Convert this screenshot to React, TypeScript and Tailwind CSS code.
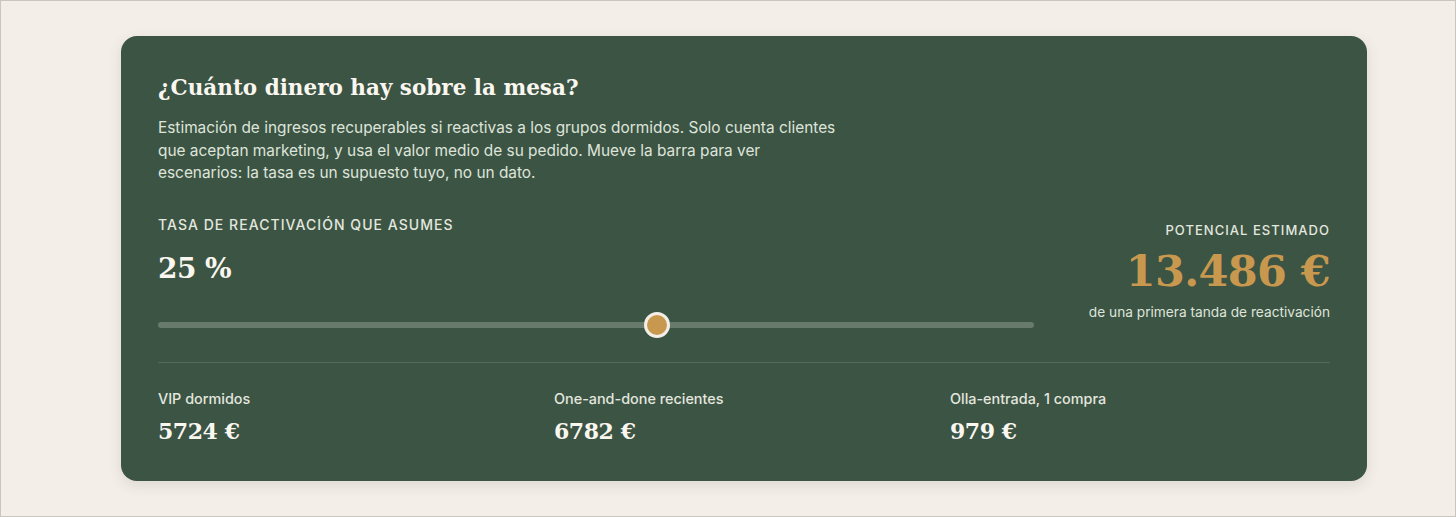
import { useState } from 'react';

const serif = { fontFamily: '"DejaVu Serif", "Liberation Serif", serif' };

const segments = [
  { label: 'VIP dormidos', value: 5724 },
  { label: 'One-and-done recientes', value: 6782 },
  { label: 'Olla-entrada, 1 compra', value: 979 },
];

const MIN_RATE = 5;
const MAX_RATE = 40;

function RateSlider({ value }: { value: number }) {
  const pct = (value - MIN_RATE) / (MAX_RATE - MIN_RATE);
  return (
    <div className="relative h-[26px] flex items-center">
      <div className="w-full h-[6px] rounded-full bg-[#687a6c]" />
      <div
        className="absolute top-0 h-[26px] w-[26px] rounded-full bg-[#c9984f] border-[3px] border-[#f3efe8]"
        style={{ left: `calc(${pct} * (100% - 26px))` }}
      />
    </div>
  );
}

export default function App() {
  const [rate] = useState(25);
  const total = segments.reduce((s, x) => s + x.value, 0) + 1;

  return (
    <div
      className="min-h-[517px] bg-[#f3efe8] border border-[#c9c5bf] pt-[35px]"
      style={{ fontFamily: 'Inter, "Noto Sans", sans-serif' }}
    >
      <div className="ml-[120px] w-[1246px] bg-[#3c5444] rounded-2xl px-[37px] pt-[37px] pb-[36px] shadow-[0_4px_14px_rgba(60,50,30,0.12)]">
        <h2 className="text-[21.5px] leading-[30px] font-bold text-[#faf7f0]" style={serif}>
          ¿Cuánto dinero hay sobre la mesa?
        </h2>
        <p className="mt-[14px] max-w-[690px] text-[15.4px] leading-[22.5px] text-[#dfe4db]">
          Estimación de ingresos recuperables si reactivas a los grupos dormidos. Solo cuenta clientes
          que aceptan marketing, y usa el valor medio de su pedido. Mueve la barra para ver
          escenarios: la tasa es un supuesto tuyo, no un dato.
        </p>

        <div className="mt-[30px] flex items-center gap-[55px]">
          <div className="flex-1">
            <div className="text-[14px] leading-5 font-medium tracking-[0.075em] text-[#e3e7df]">
              TASA DE REACTIVACIÓN QUE ASUMES
            </div>
            <div className="mt-[16px] text-[28px] leading-9 font-bold text-[#faf7f0] tracking-[-0.02em]" style={serif}>
              {rate} %
            </div>
            <div className="mt-[25px]">
              <RateSlider value={rate} />
            </div>
          </div>
          <div className="text-right pb-[10px]">
            <div className="text-[13px] leading-5 font-medium tracking-[0.08em] text-[#e3e7df]">
              POTENCIAL ESTIMADO
            </div>
            <div className="mt-[6px] text-[43px] leading-[50px] font-bold text-[#c9984f] tracking-[-0.015em]" style={serif}>
              {total.toLocaleString('de-DE')} €
            </div>
            <div className="mt-[6px] text-[13.7px] leading-5 text-[#dfe4db]">
              de una primera tanda de reactivación
            </div>
          </div>
        </div>

        <div className="mt-[24px] h-px bg-[#56695a]" />

        <div className="mt-[26px] grid grid-cols-3 gap-4">
          {segments.map((s) => (
            <div key={s.label}>
              <div className="text-[14.4px] leading-5 font-medium text-[#e3e7df]">{s.label}</div>
              <div className="mt-[8px] text-[22px] leading-7 font-bold text-[#faf7f0] tracking-[-0.02em]" style={serif}>
                {s.value} €
              </div>
            </div>
          ))}
        </div>
      </div>
    </div>
  );
}
